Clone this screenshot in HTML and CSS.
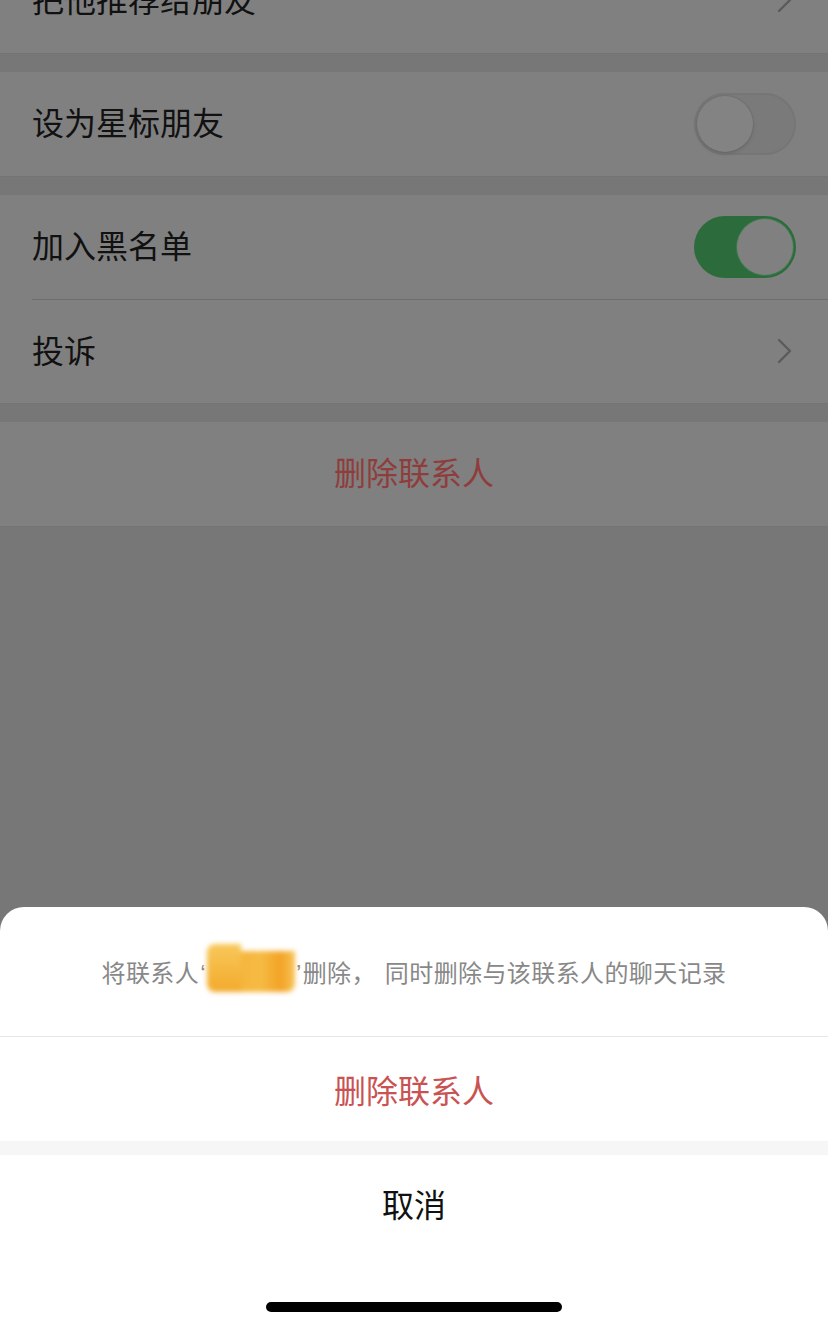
FILE: index.html
```html
<!DOCTYPE html>
<html lang="zh-CN">
<head>
    <meta charset="UTF-8">
    <meta name="viewport" content="width=device-width, initial-scale=1.0">
    <title>删除联系人</title>
    <link rel="stylesheet" href="styles.css">
</head>
<body>
    <div class="settings">
        <div class="group first">
            <div class="cell">
                <span class="label">把他推荐给朋友</span>
                <svg class="chevron" viewBox="0 0 16 26"><path d="M2 2 L13 13 L2 24" /></svg>
            </div>
        </div>
        <div class="group">
            <div class="cell">
                <span class="label">设为星标朋友</span>
                <span class="switch"><span class="knob"></span></span>
            </div>
        </div>
        <div class="group">
            <div class="cell">
                <span class="label">加入黑名单</span>
                <span class="switch on"><span class="knob"></span></span>
            </div>
            <div class="cell divided">
                <span class="label">投诉</span>
                <svg class="chevron" viewBox="0 0 16 26"><path d="M2 2 L13 13 L2 24" /></svg>
            </div>
        </div>
        <div class="group">
            <div class="cell danger">删除联系人</div>
        </div>
    </div>

    <div class="sheet">
        <div class="sheet-message">
            <p>将联系人<span class="quote">‘</span><span class="name-blur"></span><span class="quote">’</span>删除，<span class="gap"></span>同时删除与该联系人的聊天记录</p>
        </div>
        <div class="sheet-action danger">删除联系人</div>
        <div class="sheet-gap"></div>
        <div class="sheet-action cancel">取消</div>
        <div class="home-area">
            <span class="home-indicator"></span>
        </div>
    </div>
</body>
</html>
```

FILE: styles.css
```css
body {
    margin: 0;
    width: 828px;
    height: 1328px;
    overflow: hidden;
    background: #777777;
    font-family: "Noto Sans CJK SC", "Noto Sans", sans-serif;
    display: flex;
    flex-direction: column;
}
.settings {
    flex: 1;
    display: flex;
    flex-direction: column;
    gap: 18px;
}
.group {
    background: #808080;
    border-bottom: 1px solid #747474;
}
.group.first {
    margin-top: -51px;
}
.cell {
    height: 104px;
    margin-left: 32px;
    padding-right: 32px;
    padding-bottom: 6px;
    display: flex;
    align-items: center;
    justify-content: space-between;
    box-sizing: border-box;
}
.cell.divided {
    border-top: 1px solid #6e6e6e;
}
.cell .switch {
    margin-top: 6px;
}
.cell .chevron {
    margin-top: 4px;
}
.label {
    font-size: 32px;
    color: #111111;
}
.cell.danger {
    justify-content: center;
    margin-left: 0;
    padding-right: 0;
    font-size: 32px;
    color: #8f3d3c;
}
.chevron {
    width: 16px;
    height: 26px;
    margin-right: 3px;
    fill: none;
    stroke: #5b5b5b;
    stroke-width: 2.4;
    stroke-linecap: round;
    stroke-linejoin: round;
}
.switch {
    width: 102px;
    height: 62px;
    border-radius: 31px;
    background: #7a7a7a;
    box-shadow: inset 0 0 0 2px #767676;
    display: flex;
    align-items: center;
    padding: 0 3px;
    box-sizing: border-box;
}
.switch .knob {
    width: 56px;
    height: 56px;
    border-radius: 50%;
    background: #838383;
    box-shadow: 0 2px 4px rgba(0, 0, 0, 0.12), 0 0 0 1px rgba(0, 0, 0, 0.05);
}
.switch.on {
    background: #2c6b3b;
    box-shadow: none;
    justify-content: flex-end;
}
.switch.on .knob {
    background: #808080;
    box-shadow: 0 0 0 1px #3b7a4a;
}
.sheet {
    height: 421px;
    background: #ffffff;
    border-radius: 24px 24px 0 0;
    display: flex;
    flex-direction: column;
}
.sheet-message {
    height: 129px;
    border-bottom: 1px solid #e6e6e6;
    display: flex;
    align-items: center;
    justify-content: center;
    font-size: 24px;
    color: #888888;
}
.sheet-message p {
    margin: 0 0 8px;
    white-space: pre;
    letter-spacing: 0.4px;
}
.quote {
    font-family: "Liberation Sans", sans-serif;
    padding: 0 1px;
}
.gap {
    display: inline-block;
    width: 9px;
}
.name-blur {
    display: inline-block;
    width: 88px;
    height: 48px;
    vertical-align: -10px;
    border-radius: 8px;
    background:
        linear-gradient(180deg, #f8c85a, #f3aa2c) 0 0 / 34px 48px no-repeat,
        linear-gradient(90deg, #f5b43a 0%, #f6bb44 40%, #f2a326 75%, #f8c356 100%) 30px 7px / 58px 41px no-repeat;
    filter: blur(2.5px);
}
.sheet-action {
    height: 104px;
    display: flex;
    align-items: center;
    justify-content: center;
    font-size: 32px;
    color: #111111;
}
.sheet-action.cancel {
    padding-bottom: 8px;
    box-sizing: border-box;
}
.sheet-action.danger {
    color: #c95252;
}
.sheet-gap {
    height: 14px;
    background: #f6f6f6;
}
.home-area {
    display: flex;
    justify-content: center;
    padding-top: 43px;
}
.home-indicator {
    width: 296px;
    height: 10px;
    border-radius: 5px;
    background: #000000;
}
```
